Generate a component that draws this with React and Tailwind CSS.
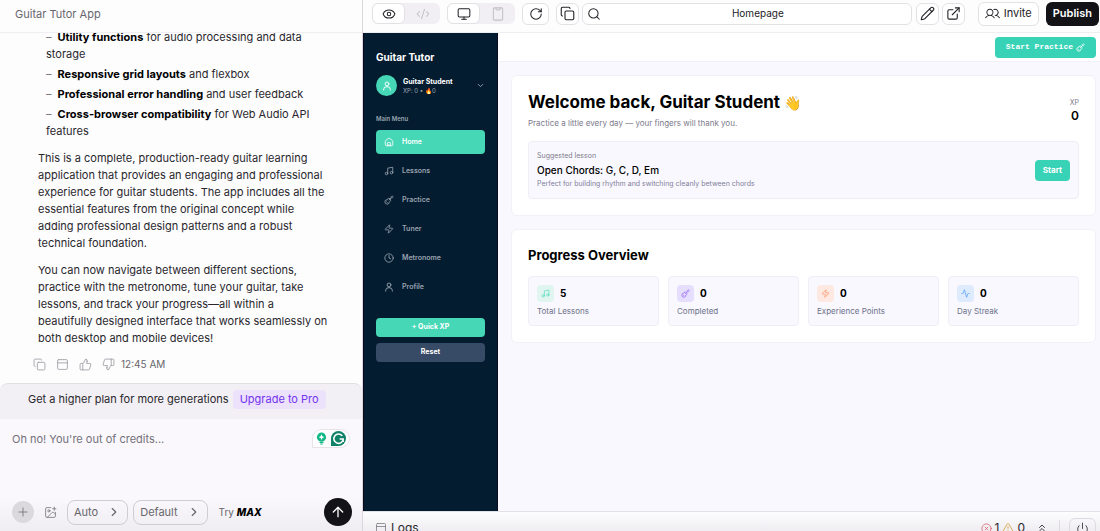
import React from 'react';
import {
    Eye, CodeXml, Monitor, RotateCw, Copy, Search, Pencil, ExternalLink,
    ChevronDown, ChevronRight, ChevronsUp, Music, Guitar, Zap, Clock, UserRound, Activity,
    PanelTop, ThumbsUp, ThumbsDown, Plus, ImagePlus, ArrowUp, CircleX, TriangleAlert, Power
} from 'lucide-react';
import { PiUsers } from 'react-icons/pi';

const HomeIcon = ({ className }) => (
    <svg viewBox="0 0 24 24" fill="none" stroke="currentColor" strokeWidth="2" strokeLinecap="round" strokeLinejoin="round" className={className}>
        <path d="M3 10.5a3 3 0 0 1 1.2-2.4l6-4.5a3 3 0 0 1 3.6 0l6 4.5a3 3 0 0 1 1.2 2.4V18a3 3 0 0 1-3 3H6a3 3 0 0 1-3-3z" />
        <path d="M8 21v-6a2 2 0 0 1 2-2h4a2 2 0 0 1 2 2v6M12 17v4" />
    </svg>
);

const PhoneIcon = ({ className }) => (
    <svg viewBox="0 0 24 24" fill="none" stroke="currentColor" strokeWidth="1.75" strokeLinecap="round" strokeLinejoin="round" className={className}>
        <rect x="4" y="1.5" width="16" height="21" rx="2" />
        <path d="M8.5 1.5v2A1.5 1.5 0 0 0 10 5h4a1.5 1.5 0 0 0 1.5-1.5v-2" />
    </svg>
);

const ProfileIcon = ({ className }) => (
    <svg viewBox="0 0 24 24" fill="none" stroke="currentColor" strokeWidth="2.25" strokeLinecap="round" strokeLinejoin="round" className={className}>
        <circle cx="12" cy="7" r="4.5" />
        <path d="M4 22v-2a8 6.5 0 0 1 16 0v2" />
    </svg>
);

const menuItems = [
    { label: 'Home', icon: HomeIcon, active: true },
    { label: 'Lessons', icon: Music },
    { label: 'Practice', icon: Guitar },
    { label: 'Tuner', icon: Zap },
    { label: 'Metronome', icon: Clock },
    { label: 'Profile', icon: ProfileIcon }
];

const stats = [
    { label: 'Total Lessons', value: 5, icon: Music, tint: 'bg-[#e0f5f0] text-[#5edcc0]' },
    { label: 'Completed', value: 0, icon: Guitar, tint: 'bg-[#e6defd] text-[#9b6cf5]' },
    { label: 'Experience Points', value: 0, icon: Zap, tint: 'bg-[#fde8e2] text-[#fb9468]' },
    { label: 'Day Streak', value: 0, icon: Activity, tint: 'bg-[#deebfd] text-[#559ff5]' }
];

const features = [
    ['Utility functions', 'for audio processing and data storage'],
    ['Responsive grid layouts', 'and flexbox'],
    ['Professional error handling', 'and user feedback'],
    ['Cross-browser compatibility', 'for Web Audio API features']
];

const messageActions = [
    { label: 'Copy', icon: Copy },
    { label: 'Open preview', icon: PanelTop },
    { label: 'Like', icon: ThumbsUp },
    { label: 'Dislike', icon: ThumbsDown }
];

const ChatPanel = () => (
    <section className="flex w-[33%] shrink-0 flex-col border-r border-[#d9d7dc] bg-[#fdfdfe]">
        <header className="flex h-[33px] shrink-0 items-center border-b border-[#efeef1] px-[15px] pb-1 text-[11px] text-[#68666c]">
            Guitar Tutor App
        </header>

        <div className="flex min-h-0 flex-1 flex-col justify-end gap-[10px] overflow-hidden pr-[34px] pb-3 pl-[38px] text-[11px] leading-[17px] text-[#29272d]">
            <ul className="flex flex-col gap-[3px] pl-2">
                {features.map(([name, rest]) => (
                    <li key={name}>
                        <span className="mr-[6px] text-[#77747c]">–</span>
                        <strong className="font-bold text-black">{name}</strong> {rest}
                    </li>
                ))}
            </ul>
            <p>
                This is a complete, production-ready guitar learning application that provides an engaging and
                professional experience for guitar students. The app includes all the essential features from the
                original concept while adding professional design patterns and a robust technical foundation.
            </p>
            <p>
                You can now navigate between different sections, practice with the metronome, tune your guitar, take
                lessons, and track your progress—all within a beautifully designed interface that works seamlessly on
                both desktop and mobile devices!
            </p>
            <div className="-ml-[5px] flex h-[14px] items-center gap-[10px] text-[#9a979f]">
                {messageActions.map(({ label, icon: Icon }) => (
                    <button key={label} aria-label={label}>
                        <Icon className="h-[13px] w-[13px]" strokeWidth={1.5} />
                    </button>
                ))}
                <span className="-ml-1 text-[10px] text-[#68666c]">12:45 AM</span>
            </div>
        </div>

        <div className="flex h-9 shrink-0 items-center gap-1 rounded-t-lg border-t border-[#e2e0e5] bg-[#f2f0f4] pb-1 pl-7 text-[11px] text-[#29272d]">
            Get a higher plan for more generations
            <a href="#upgrade" className="rounded-sm bg-[#ece2fc] px-[7px] py-px text-[#7433ee]">Upgrade to Pro</a>
        </div>

        <div className="flex h-28 shrink-0 flex-col bg-[#faf8fc]">
            <div className="flex flex-1 items-start px-3 pt-[10px]">
                <textarea
                    aria-label="Message"
                    placeholder="Oh no! You're out of credits..."
                    className="h-10 min-w-0 flex-1 resize-none bg-transparent pt-[2px] text-[11px] leading-[17px] outline-none placeholder:text-[#74717a]"
                />
                <div className="flex h-[19px] items-center gap-1 rounded-full rounded-bl-none border border-[#e6e4e9] bg-white px-[3px]">
                    <svg viewBox="0 0 12 14" className="h-[13px] w-[11px]">
                        <circle cx="6" cy="5.5" r="5" fill="#12b886" />
                        <path d="M6 2.4 7 4.5l2.1 1-2.1 1-1 2.100-1-2.100-2.100-1 2.100-1z" fill="#fff" />
                        <path d="M3.8 11.2h4.4M4.6 13h2.8" stroke="#12b886" strokeWidth="1.3" />
                    </svg>
                    <svg viewBox="0 0 16 16" className="h-[15px] w-[15px]">
                        <path d="M8 0a8 8 0 0 0-8 8v8h8A8 8 0 0 0 8 0z" fill="#0f8268" />
                        <path d="M12 5.2A5 5 0 1 0 13 8.5H9.2M12.9 8.5v3.3" fill="none" stroke="#fff" strokeWidth="1.7" />
                    </svg>
                </div>
            </div>
            <div className="flex items-center gap-[5px] bg-linear-to-b from-[#faf8fc] to-[#efedf1] px-3 pb-[5px]">
                <button aria-label="Add" className="flex h-[22px] w-[22px] items-center justify-center rounded-full bg-[#dbd9de] text-[#77747c]">
                    <Plus className="h-[14px] w-[14px]" strokeWidth={1.5} />
                </button>
                <button aria-label="Add image" className="flex h-[22px] w-[23px] items-center justify-center text-[#77747c]">
                    <ImagePlus className="h-[13px] w-[13px]" strokeWidth={1.5} />
                </button>
                <button className="flex h-[25px] items-center gap-[9px] rounded-lg border border-[#cfcdd3] px-[6px] text-[11px] text-[#68666c]">
                    Auto <ChevronRight className="h-[14px] w-[14px]" />
                </button>
                <button className="flex h-[25px] items-center gap-[9px] rounded-lg border border-[#cfcdd3] px-[6px] text-[11px] text-[#68666c]">
                    Default <ChevronRight className="h-[14px] w-[14px]" />
                </button>
                <span className="ml-[6px] text-[10px] text-[#68666c]">
                    Try <b className="font-extrabold text-black italic">MAX</b>
                </span>
                <button aria-label="Send" className="-mr-[2px] ml-auto flex h-7 w-7 items-center justify-center rounded-full bg-[#131217] text-white">
                    <ArrowUp className="h-4 w-4" />
                </button>
            </div>
        </div>
    </section>
);

const ToolButton = ({ label, icon: Icon }) => (
    <button aria-label={label} className="flex h-[22px] w-[23px] shrink-0 items-center justify-center rounded-md border border-[#e3e1e6] bg-white text-[#232127]">
        <Icon className="h-[15px] w-[15px]" strokeWidth={1.75} />
    </button>
);

const ToolSwitch = ({ on: On, off: Off, onLabel, offLabel }) => (
    <div className="flex h-[21px] w-[68px] shrink-0 rounded-md bg-[#f1eff3]">
        <button aria-label={onLabel} className="flex w-[33px] items-center justify-center rounded-md border border-[#e3e1e6] bg-white text-[#232127]">
            <On className="h-[14px] w-[14px]" strokeWidth={1.75} />
        </button>
        <button aria-label={offLabel} className="flex flex-1 items-center justify-center text-[#c3c0c7]">
            <Off className="h-[14px] w-[14px]" strokeWidth={1.75} />
        </button>
    </div>
);

const Toolbar = () => (
    <header className="flex h-[33px] shrink-0 items-center gap-[7px] border-b border-[#efeef1] bg-[#fdfdfe] pr-[1px] pb-[5px] pl-[9px]">
        <ToolSwitch on={Eye} off={CodeXml} onLabel="Preview" offLabel="Code" />
        <ToolSwitch on={Monitor} off={PhoneIcon} onLabel="Desktop" offLabel="Mobile" />
        <button aria-label="Reload" className="flex h-[22px] w-[27px] shrink-0 items-center justify-center rounded-md border border-[#e3e1e6] bg-white text-[#232127]">
            <RotateCw className="h-[14px] w-[14px]" strokeWidth={1.75} />
        </button>
        <ToolButton label="Duplicate" icon={Copy} />
        <label className="-ml-1 flex h-[22px] min-w-0 flex-1 items-center rounded-md border border-[#e3e1e6] bg-white px-1 text-[#232127]">
            <Search className="h-[14px] w-[14px] shrink-0" strokeWidth={1.75} />
            <input aria-label="Page" defaultValue="Homepage" className="min-w-0 flex-1 bg-transparent pl-2 text-center text-[10px] outline-none" />
        </label>
        <div className="-ml-[3px] flex gap-[3px]">
            <ToolButton label="Edit" icon={Pencil} />
            <ToolButton label="Open in new tab" icon={ExternalLink} />
        </div>
        <button className="ml-[6px] flex h-6 shrink-0 items-center gap-1 rounded-md border border-[#e3e1e6] bg-white px-[6px] text-[11px] text-[#232127]">
            <PiUsers className="h-[15px] w-[15px]" /> Invite
        </button>
        <button className="h-6 shrink-0 rounded-md bg-[#131217] px-[7px] text-[11px] font-semibold text-white">Publish</button>
    </header>
);

const Sidebar = () => (
    <aside className="flex w-[135px] shrink-0 flex-col border-x border-[#0b0820] bg-[#041c2f] px-3 pt-[17px] text-white">
        <h1 className="text-[10px] leading-[14px] font-bold">Guitar Tutor</h1>
        <button className="mt-[11px] flex items-center text-left">
            <span className="flex h-[21px] w-[21px] items-center justify-center rounded-full bg-[#45d7b6]">
                <ProfileIcon className="h-[10px] w-[10px]" />
            </span>
            <span className="ml-[6px] flex flex-1 flex-col text-[7px] leading-[9px]">
                <b>Guitar Student</b>
                <span className="text-[6px] text-[#9aa5b1]">XP: 0 • 🔥0</span>
            </span>
            <ChevronDown className="h-[9px] w-[9px] text-[#b4bdc7]" />
        </button>
        <h2 className="mt-[18px] text-[6px] leading-[9px] font-semibold text-[#9aa5b1]">Main Menu</h2>
        <nav className="mt-[7px] flex flex-col gap-[5px] text-[7px] leading-[10px] font-semibold">
            {menuItems.map(({ label, icon: Icon, active }) => (
                <a
                    key={label}
                    href={`#${label.toLowerCase()}`}
                    className={`flex h-6 items-center gap-2 rounded-sm px-2 ${active ? 'bg-[#45d7b6] text-white' : 'text-[#98a2af]'}`}
                >
                    <Icon className="h-[10px] w-[10px]" /> {label}
                </a>
            ))}
        </nav>
        <div className="mt-[19px] flex flex-col gap-[6px] text-[7px] font-bold">
            <button className="h-[19px] rounded-sm bg-[#45d7b6]">+ Quick XP</button>
            <button className="h-[19px] rounded-sm bg-[#384b66]">Reset</button>
        </div>
    </aside>
);

const Dashboard = () => (
    <main className="flex min-w-0 flex-1 flex-col bg-[#f9f8fe]">
        <div className="flex h-[29px] shrink-0 items-center justify-end border-b border-[#f2f1f8] bg-white pr-1">
            <button className="flex h-[21px] items-center gap-[3px] rounded-sm bg-[#38d3b7] px-[11px] font-['Liberation_Mono',monospace] text-[8px] font-bold text-white">
                Start Practice <Guitar className="h-[9px] w-[9px]" />
            </button>
        </div>

        <div className="flex flex-col gap-[13px] pt-[13px] pr-1 pl-[13px]">
            <section className="rounded-md border border-[#f2f1f8] bg-white p-4">
                <div className="flex items-center justify-between">
                    <div>
                        <h2 className="text-[17px] leading-5 font-bold text-black">
                            Welcome back, Guitar Student <span className="text-[14px]">👋</span>
                        </h2>
                        <p className="mt-1 text-[8px] leading-3 text-[#7d7b8b]">Practice a little every day — your fingers will thank you.</p>
                    </div>
                    <div className="text-right">
                        <p className="text-[7px] leading-[10px] text-[#7d7b8b]">XP</p>
                        <p className="text-[12px] leading-4 font-semibold text-black">0</p>
                    </div>
                </div>
                <div className="mt-3 flex items-center justify-between rounded-sm border border-[#efeef7] bg-[#f9f8fe] p-2">
                    <div>
                        <p className="text-[7px] leading-3 text-[#7d7b8b]">Suggested lesson</p>
                        <h3 className="text-[10px] leading-4 font-medium text-black">Open Chords: G, C, D, Em</h3>
                        <p className="text-[7px] leading-3 text-[#82809a]">Perfect for building rhythm and switching cleanly between chords</p>
                    </div>
                    <button className="h-[21px] rounded-sm bg-[#38d3b7] px-2 text-[8px] font-bold text-white">Start</button>
                </div>
            </section>

            <section className="rounded-md border border-[#f2f1f8] bg-white p-4">
                <h2 className="text-[13px] leading-[18px] font-bold text-black">Progress Overview</h2>
                <div className="mt-3 grid grid-cols-4 gap-[9px]">
                    {stats.map(({ label, value, icon: Icon, tint }) => (
                        <div key={label} className="rounded-sm border border-[#efeef7] bg-[#f9f8fe] p-2">
                            <div className="flex items-center gap-[6px]">
                                <span className={`flex h-[17px] w-[17px] items-center justify-center rounded-sm ${tint}`}>
                                    <Icon className="h-[9px] w-[9px]" />
                                </span>
                                <b className="text-[10px] text-black">{value}</b>
                            </div>
                            <p className="mt-[3px] text-[8px] leading-3 text-[#6c718a]">{label}</p>
                        </div>
                    ))}
                </div>
            </section>
        </div>
    </main>
);

const LogsBar = () => (
    <footer className="flex h-5 shrink-0 items-start overflow-hidden border-t border-[#e3e1e6] bg-linear-to-b from-[#fdfdfe] to-[#efedf1] pr-1 pl-3 text-[12px] leading-4 text-[#29272d]">
        <button className="mt-2 flex items-center gap-1">
            <PanelTop className="h-3 w-3 text-[#77747c]" strokeWidth={1.5} /> Logs
        </button>
        <div className="mt-2 ml-auto flex items-center gap-[3px]">
            <CircleX className="h-[11px] w-[11px] text-[#d9606c]" strokeWidth={1.75} /> 1
            <TriangleAlert className="h-3 w-3 text-[#d9a84a]" strokeWidth={1.75} /> 0
            <ChevronsUp className="ml-2 h-3 w-3" strokeWidth={1.75} />
            <span className="ml-2 h-4 w-px bg-[#dddbe0]" />
        </div>
        <button aria-label="Power" className="mt-[6px] ml-[9px] flex h-[22px] w-[27px] items-start justify-center rounded-md border border-[#dddbe0] pt-[3px]">
            <Power className="h-[13px] w-[13px]" strokeWidth={1.5} />
        </button>
    </footer>
);

const App = () => (
    <div className="flex h-screen overflow-hidden font-['Inter',sans-serif]">
        <ChatPanel />
        <div className="flex min-w-0 flex-1 flex-col">
            <Toolbar />
            <div className="flex min-h-0 flex-1">
                <Sidebar />
                <Dashboard />
            </div>
            <LogsBar />
        </div>
    </div>
);

export default App;
